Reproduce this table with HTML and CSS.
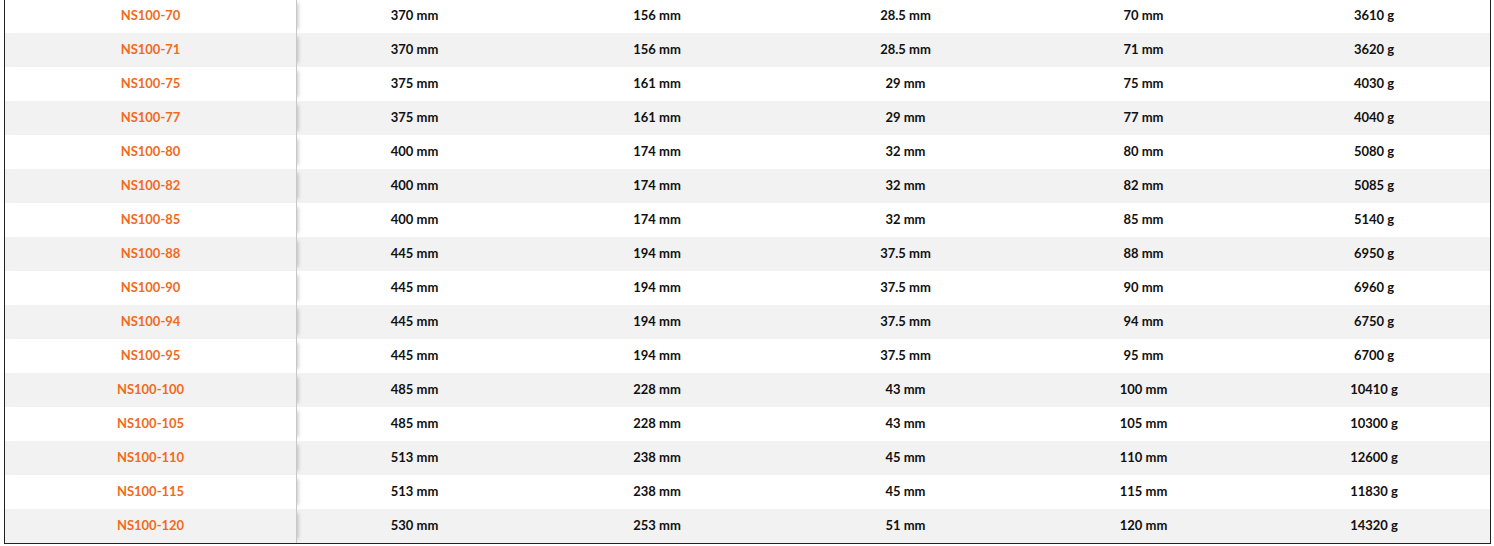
FILE: index.html
```html
<!DOCTYPE html>
<html>
<head>
<meta charset="utf-8">
<link rel="stylesheet" href="styles.css">
</head>
<body>
<div class="wrap">
<table class="specs">
<colgroup>
<col class="c0"><col class="c1"><col class="c2"><col class="c3"><col class="c4"><col class="c5">
</colgroup>
<tbody>
<tr><td class="model">NS100-70</td><td>370 mm</td><td>156 mm</td><td>28.5 mm</td><td>70 mm</td><td>3610 g</td></tr>
<tr><td class="model">NS100-71</td><td>370 mm</td><td>156 mm</td><td>28.5 mm</td><td>71 mm</td><td>3620 g</td></tr>
<tr><td class="model">NS100-75</td><td>375 mm</td><td>161 mm</td><td>29 mm</td><td>75 mm</td><td>4030 g</td></tr>
<tr><td class="model">NS100-77</td><td>375 mm</td><td>161 mm</td><td>29 mm</td><td>77 mm</td><td>4040 g</td></tr>
<tr><td class="model">NS100-80</td><td>400 mm</td><td>174 mm</td><td>32 mm</td><td>80 mm</td><td>5080 g</td></tr>
<tr><td class="model">NS100-82</td><td>400 mm</td><td>174 mm</td><td>32 mm</td><td>82 mm</td><td>5085 g</td></tr>
<tr><td class="model">NS100-85</td><td>400 mm</td><td>174 mm</td><td>32 mm</td><td>85 mm</td><td>5140 g</td></tr>
<tr><td class="model">NS100-88</td><td>445 mm</td><td>194 mm</td><td>37.5 mm</td><td>88 mm</td><td>6950 g</td></tr>
<tr><td class="model">NS100-90</td><td>445 mm</td><td>194 mm</td><td>37.5 mm</td><td>90 mm</td><td>6960 g</td></tr>
<tr><td class="model">NS100-94</td><td>445 mm</td><td>194 mm</td><td>37.5 mm</td><td>94 mm</td><td>6750 g</td></tr>
<tr><td class="model">NS100-95</td><td>445 mm</td><td>194 mm</td><td>37.5 mm</td><td>95 mm</td><td>6700 g</td></tr>
<tr><td class="model">NS100-100</td><td>485 mm</td><td>228 mm</td><td>43 mm</td><td>100 mm</td><td>10410 g</td></tr>
<tr><td class="model">NS100-105</td><td>485 mm</td><td>228 mm</td><td>43 mm</td><td>105 mm</td><td>10300 g</td></tr>
<tr><td class="model">NS100-110</td><td>513 mm</td><td>238 mm</td><td>45 mm</td><td>110 mm</td><td>12600 g</td></tr>
<tr><td class="model">NS100-115</td><td>513 mm</td><td>238 mm</td><td>45 mm</td><td>115 mm</td><td>11830 g</td></tr>
<tr><td class="model">NS100-120</td><td>530 mm</td><td>253 mm</td><td>51 mm</td><td>120 mm</td><td>14320 g</td></tr>
</tbody>
</table>
</div>
</body>
</html>
```
FILE: styles.css
```css
html, body {
  margin: 0;
  padding: 0;
  background: #fff;
}
body {
  font-family: Lato, "Liberation Sans", sans-serif;
}
.wrap {
  margin: -2px 3px 0 4px;
  border: 1px solid #222;
  overflow: hidden;
}
.specs {
  width: 100%;
  border-collapse: separate;
  border-spacing: 0;
  table-layout: fixed;
}
.c0 { width: 292px; }
.c1 { width: 235px; }
.c2 { width: 250px; }
.c3 { width: 247px; }
.c4 { width: 229px; }
.c5 { width: auto; }
.specs td {
  height: 34px;
  box-sizing: border-box;
  padding: 0 0 2px;
  text-align: center;
  vertical-align: middle;
  font-size: 13px;
  font-weight: 700;
  color: #111;
  background: #fff;
}
.specs tr:nth-child(even) td {
  background: #f2f2f2;
}
.specs td.model {
  color: #f26a1b;
  position: sticky;
  left: 0;
  z-index: 1;
  border-right: 1px solid #c8c8c8;
  box-shadow: 5px 0 4px -4px rgba(0, 0, 0, 0.25);
}
```
